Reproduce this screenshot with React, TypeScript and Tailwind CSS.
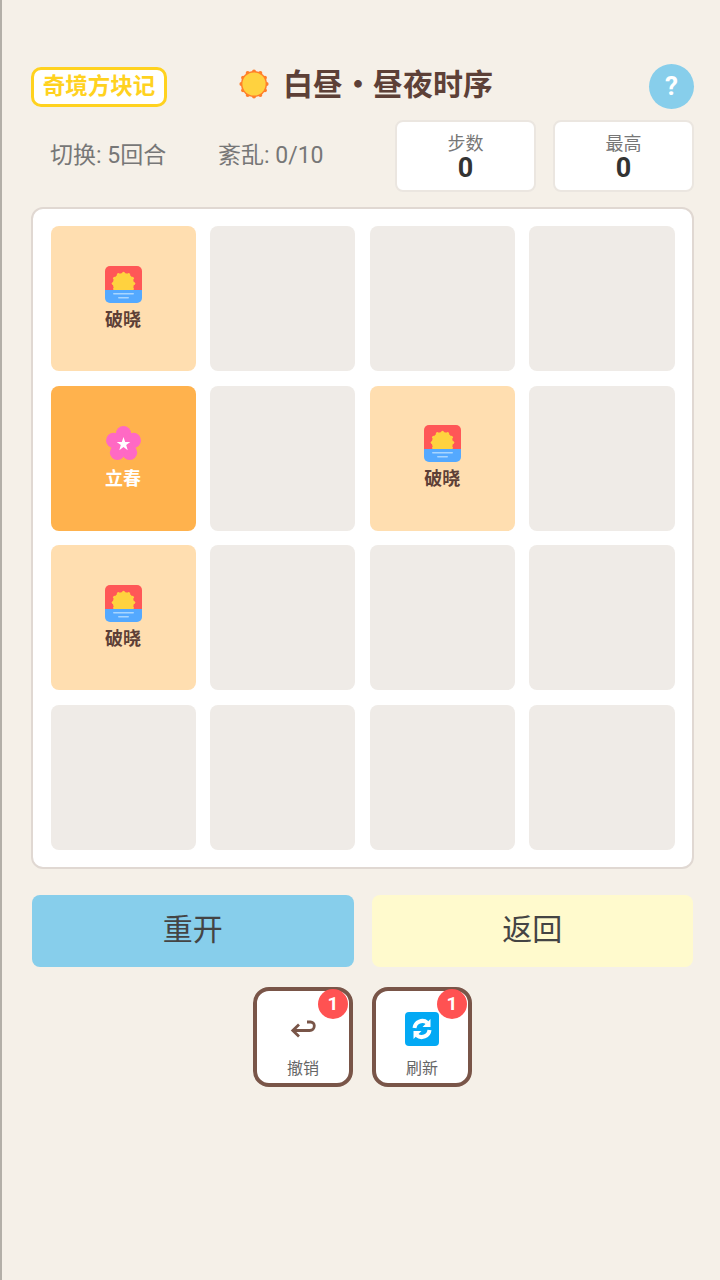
const SCALLOPS = [0, 30, 60, 90, 120, 150, 180, 210, 240, 270, 300, 330];

function scallopPos(cx: number, cy: number, r: number, deg: number) {
  const a = (deg * Math.PI) / 180;
  return { x: cx + r * Math.cos(a), y: cy + r * Math.sin(a) };
}

function SunIcon() {
  return (
    <svg width="30" height="30" viewBox="0 0 30 30" className="block">
      <circle cx="15" cy="15" r="13" fill="#ff7f2a" />
      {SCALLOPS.map((d) => {
        const p = scallopPos(15, 15, 12.6, d);
        return <circle key={d} cx={p.x} cy={p.y} r="2" fill="#ff7f2a" />;
      })}
      <circle cx="15" cy="15" r="11.6" fill="#ffd23f" />
    </svg>
  );
}

function DawnIcon() {
  return (
    <svg width="37" height="37" viewBox="0 0 37 37" className="block">
      <defs>
        <clipPath id="dawn-clip">
          <rect width="37" height="37" rx="5" />
        </clipPath>
      </defs>
      <g clipPath="url(#dawn-clip)">
        <rect width="37" height="24" fill="#ff5757" />
        <circle cx="18.5" cy="17.5" r="10.6" fill="#ffd23f" />
        {SCALLOPS.map((d) => {
          const p = scallopPos(18.5, 17.5, 10.3, d);
          return <circle key={d} cx={p.x} cy={p.y} r="1.5" fill="#ffd23f" />;
        })}
        <rect y="24" width="37" height="13" fill="#54a9ff" />
        <rect x="8" y="27" width="21" height="1.6" rx="0.8" fill="#a9d6ff" />
        <rect x="13" y="31" width="11" height="1.6" rx="0.8" fill="#a9d6ff" />
      </g>
    </svg>
  );
}

function BlossomIcon() {
  return (
    <svg width="37" height="37" viewBox="0 0 37 37" className="block">
      <g fill="#ff69c4">
        <circle cx="18.5" cy="8.6" r="7.6" />
        <circle cx="28.4" cy="15.4" r="7.6" />
        <circle cx="24.6" cy="27.4" r="7.6" />
        <circle cx="12.4" cy="27.4" r="7.6" />
        <circle cx="8.6" cy="15.4" r="7.6" />
        <circle cx="18.5" cy="18.5" r="9" />
      </g>
      <polygon
        fill="#fff"
        points="18.5,12 20.2,17 25.3,17 21.2,20.1 22.7,25.2 18.5,22.1 14.3,25.2 15.8,20.1 11.7,17 16.8,17"
      />
    </svg>
  );
}

function UndoIcon() {
  return (
    <svg width="26" height="20" viewBox="0 0 26 20" fill="none" className="block">
      <path
        d="M17 3h3.5a3.8 3.8 0 0 1 3.8 3.8c0 2.8-2 4.7-4.6 4.7H3M9 5.5 2.8 11.5 9 17.5"
        stroke="#795548"
        strokeWidth="2.8"
      />
    </svg>
  );
}

function RefreshIcon() {
  return (
    <svg width="34" height="34" viewBox="0 0 34 34" className="block">
      <rect width="34" height="34" rx="4" fill="#03a9f4" />
      <path
        d="M9.5 16a7.8 7.8 0 0 1 12.8-5.2"
        fill="none"
        stroke="#fff"
        strokeWidth="4"
      />
      <path d="M25.5 7v8h-8z" fill="#fff" />
      <path
        d="M24.5 18a7.8 7.8 0 0 1-12.8 5.2"
        fill="none"
        stroke="#fff"
        strokeWidth="4"
      />
      <path d="M8.5 27v-8h8z" fill="#fff" />
    </svg>
  );
}

function Tile({ kind }: { kind?: 'dawn' | 'spring' }) {
  if (kind === 'dawn') {
    return (
      <div className="aspect-square rounded-lg bg-[#ffdeb0] flex flex-col items-center justify-center pt-[1px]">
        <DawnIcon />
        <span className="mt-[3px] text-[18px] leading-[27px] font-bold text-[#5d4037]">破晓</span>
      </div>
    );
  }
  if (kind === 'spring') {
    return (
      <div className="aspect-square rounded-lg bg-[#ffb24d] flex flex-col items-center justify-center pt-[1px]">
        <BlossomIcon />
        <span className="mt-[3px] text-[18px] leading-[27px] font-bold text-white">立春</span>
      </div>
    );
  }
  return <div className="aspect-square rounded-lg bg-[#efebe7]" />;
}

function StatBox({ label }: { label: string }) {
  return (
    <div className="w-[141px] h-[72px] bg-white rounded-lg border-2 border-[#ebe6e0] flex flex-col items-center justify-center pt-[2px]">
      <span className="text-[18px] leading-[22px] text-[#777]">{label}</span>
      <span className="text-[27px] leading-[27px] font-bold text-[#333]">0</span>
    </div>
  );
}

function ToolButton({ label, children }: { label: string; children: React.ReactNode }) {
  return (
    <div className="relative w-[100px] h-[100px] bg-white rounded-2xl border-4 border-[#795548] flex flex-col items-center">
      <div className="h-[58px] mt-[9px] flex items-center justify-center">{children}</div>
      <span className="text-[16px] leading-[22px] text-[#666]">{label}</span>
      <span className="absolute -top-[2px] right-[1px] w-[30px] h-[30px] rounded-full bg-[#ff5252] text-white text-[19px] font-bold flex items-center justify-center">
        1
      </span>
    </div>
  );
}

const BOARD: ('dawn' | 'spring' | undefined)[] = [
  'dawn', undefined, undefined, undefined,
  'spring', undefined, 'dawn', undefined,
  'dawn', undefined, undefined, undefined,
  undefined, undefined, undefined, undefined,
];

export default function App() {
  return (
    <div
      className="min-h-[1280px] bg-[#f5f0e8] border-l-2 border-[#b3afa8] pl-[29px] pr-[26px] pt-[64px]"
      style={{ fontFamily: 'Roboto, "Noto Sans CJK SC", sans-serif' }}
    >
      {/* Header */}
      <header className="flex items-center h-[45px]">
        <div className="w-[136px] h-[40px] bg-white rounded-[10px] border-[3px] border-[#ffd21f] flex items-center justify-center text-[22.5px] font-bold text-[#ffd21f] whitespace-nowrap">
          奇境方块记
        </div>
        <div className="ml-[72px] mb-[5px] flex items-center gap-[14px] text-[30px] font-bold text-[#5d4037] whitespace-nowrap">
          <SunIcon />
          <span>白昼・昼夜时序</span>
        </div>
        <div className="ml-auto w-[45px] h-[45px] rounded-full bg-[#87ceeb] flex items-center justify-center text-white text-[26px] font-bold">
          ?
        </div>
      </header>

      {/* Stats */}
      <div className="flex items-center h-[72px] mt-[11px]">
        <span className="ml-[19px] w-[168px] text-[23px] text-[#777] whitespace-nowrap">切换: 5回合</span>
        <span className="text-[23px] text-[#777] whitespace-nowrap">紊乱: 0/10</span>
        <div className="ml-auto flex gap-[17px]">
          <StatBox label="步数" />
          <StatBox label="最高" />
        </div>
      </div>

      {/* Board */}
      <div className="mt-[15px] bg-white rounded-xl border-2 border-[#e0d8d2] py-[17px] px-[17.5px] grid grid-cols-4 gap-[14.67px]">
        {BOARD.map((kind, i) => (
          <Tile key={i} kind={kind} />
        ))}
      </div>

      {/* Actions */}
      <div className="mt-[26px] flex gap-[18px] px-[1px]">
        <button className="flex-1 h-[72px] pb-[4px] rounded-lg bg-[#87ceeb] text-[30px] text-[#444]">重开</button>
        <button className="flex-1 h-[72px] pb-[4px] rounded-lg bg-[#fffacd] text-[30px] text-[#444]">返回</button>
      </div>

      {/* Tools */}
      <div className="mt-[20px] flex justify-center gap-[19px]">
        <ToolButton label="撤销">
          <UndoIcon />
        </ToolButton>
        <ToolButton label="刷新">
          <RefreshIcon />
        </ToolButton>
      </div>
    </div>
  );
}
